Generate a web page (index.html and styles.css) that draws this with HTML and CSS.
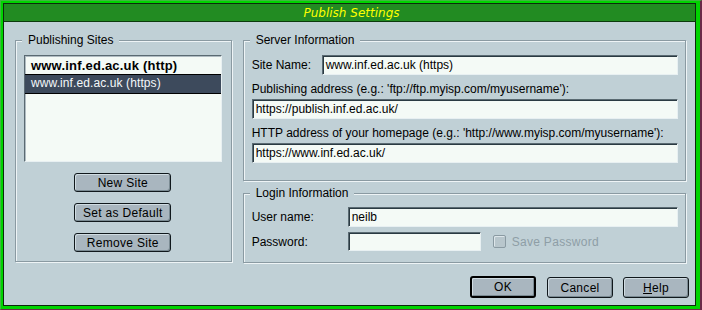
FILE: index.html
```html
<!DOCTYPE html>
<html>
<head>
<meta charset="utf-8">
<link rel="stylesheet" href="styles.css">
</head>
<body>
<div class="win">
  <div class="frame">
    <div class="titlebar"><span class="title">Publish Settings</span></div>
    <div class="content">
      <div class="columns">
        <fieldset class="group sites">
          <legend>Publishing Sites</legend>
          <div class="listbox">
            <div class="item bold">www.inf.ed.ac.uk (http)</div>
            <div class="item selected">www.inf.ed.ac.uk (https)</div>
          </div>
          <div class="sitebuttons">
            <button class="btn">New Site</button>
            <button class="btn">Set as Default</button>
            <button class="btn">Remove Site</button>
          </div>
        </fieldset>
        <div class="rightcol">
          <fieldset class="group server">
            <legend>Server Information</legend>
            <div class="row">
              <span class="lbl sitename">Site Name:</span>
              <div class="field grow">www.inf.ed.ac.uk (https)</div>
            </div>
            <div class="lbl line">Publishing address (e.g.: 'ftp://ftp.myisp.com/myusername'):</div>
            <div class="field">https://publish.inf.ed.ac.uk/</div>
            <div class="lbl line">HTTP address of your homepage (e.g.: 'http://www.myisp.com/myusername'):</div>
            <div class="field">https://www.inf.ed.ac.uk/</div>
          </fieldset>
          <fieldset class="group login">
            <legend>Login Information</legend>
            <div class="row">
              <span class="lbl loginlbl">User name:</span>
              <div class="field grow">neilb</div>
            </div>
            <div class="row pwrow">
              <span class="lbl loginlbl">Password:</span>
              <div class="field pw"></div>
              <span class="check"></span>
              <span class="disabled">Save Password</span>
            </div>
          </fieldset>
        </div>
      </div>
      <div class="actions">
        <button class="btn dlg default">OK</button>
        <button class="btn dlg">Cancel</button>
        <button class="btn dlg"><u>H</u>elp</button>
      </div>
    </div>
  </div>
</div>
</body>
</html>
```

FILE: styles.css
```css
* { box-sizing: border-box; }
html, body { margin: 0; padding: 0; }
body {
  width: 702px;
  height: 310px;
  font-family: "Liberation Sans", Arial, sans-serif;
  font-size: 12px;
  color: #000;
  background: #c0d0d6;
}
.win {
  width: 702px;
  height: 310px;
  border-top: 1px solid #3fb83f;
  border-left: 1px solid #3fb83f;
  border-right: 2px solid #6a2a48;
  border-bottom: 1px solid #6a2a48;
  background: #00d400;
}
.frame {
  margin: 2px 4px 3px 2px;
  border: 1px solid #0c2a0c;
  display: flex;
  flex-direction: column;
  height: calc(100% - 5px);
}
.titlebar {
  height: 18px;
  background: #228b22;
  border-bottom: 1px solid #0c3a0c;
  display: flex;
  align-items: center;
  justify-content: center;
}
.title {
  color: #ffff00;
  font-family: "DejaVu Sans", sans-serif;
  font-style: italic;
  font-size: 12px;
  margin-left: 4px;
}
.content {
  flex: 1;
  background: #c0d0d6;
  padding: 11px 9px 0 11px;
  display: flex;
  flex-direction: column;
}
.columns {
  display: flex;
  gap: 11px;
}
.group {
  margin: 0;
  border: 1px solid #8a9aa2;
  box-shadow: inset 1px 1px 0 #eef4f6, 1px 1px 0 #eef4f6;
  padding: 0;
  min-width: 0;
}
.group legend {
  margin-left: -2px;
  padding: 0 6px;
  line-height: 14px;
  background: #c0d0d6;
}
.sites {
  width: 217px;
  height: 229px;
  padding: 8px 9px 0 8px;
}
.listbox {
  height: 107px;
  background: #f4faf6;
  border: 1px solid;
  border-color: #5a6a72 #e8f0f2 #e8f0f2 #5a6a72;
  box-shadow: inset 1px 1px 0 #b0bcc2;
  padding: 1px 0 0 0;
}
.item {
  height: 18px;
  line-height: 17px;
  padding-left: 6px;
  font-size: 12px;
  white-space: nowrap;
}
.item.bold {
  font-weight: bold;
  font-size: 13px;
  letter-spacing: 0.2px;
  border-bottom: 1px solid #000;
}
.item.selected {
  background: #3d4a5c;
  color: #f4f8fa;
  border-bottom: 1px solid #000;
  height: 19px;
  letter-spacing: 0.1px;
}
.sitebuttons {
  display: flex;
  flex-direction: column;
  align-items: center;
  gap: 11px;
  margin-top: 11px;
}
.btn {
  width: 97px;
  height: 19px;
  padding: 0;
  font-family: "Liberation Sans", Arial, sans-serif;
  font-size: 12px;
  color: #000;
  background: #a9b6bf;
  border: 1px solid #10181c;
  border-radius: 3px;
  box-shadow: inset 1px 1px 0 #d0dce2, inset -1px -1px 0 #7a8a92;
  letter-spacing: 0.3px;
}
.rightcol {
  width: 444px;
  display: flex;
  flex-direction: column;
  gap: 5px;
}
.server {
  height: 148px;
  padding: 8px 7px 0 8px;
}
.login {
  height: 77px;
  padding: 7px 7px 0 8px;
}
.row {
  display: flex;
  align-items: center;
}
.lbl { white-space: nowrap; }
.sitename { width: 70px; }
.loginlbl { width: 96px; }
.line { margin-top: 7px; margin-bottom: 3px; line-height: 14px; }
.field {
  height: 20px;
  background: #f4faf6;
  border: 1px solid;
  border-color: #5a6a72 #e8f0f2 #e8f0f2 #5a6a72;
  box-shadow: inset 1px 1px 0 #2a3a42;
  padding-left: 3px;
  line-height: 18px;
  font-size: 12px;
  white-space: nowrap;
}
.grow { flex: 1; }
.pwrow { margin-top: 5px; }
.pw { width: 133px; height: 19px; }
.check {
  width: 13px;
  height: 13px;
  margin-left: 12px;
  border: 1px solid #8a9aa2;
  border-radius: 2px;
  background: #b8c6cc;
  box-shadow: inset 1px 1px 0 #dde6ea;
}
.disabled {
  color: #8e9ea6;
  margin-left: 6px;
  letter-spacing: 0.3px;
}
.actions {
  display: flex;
  justify-content: flex-end;
  gap: 10px;
  margin-top: 14px;
  margin-right: -3px;
}
.btn.dlg {
  width: 66px;
  height: 21px;
}
.btn.default {
  border-width: 2px;
  border-color: #000;
  height: 22px;
  margin-top: -1px;
  margin-right: 1px;
}
```
